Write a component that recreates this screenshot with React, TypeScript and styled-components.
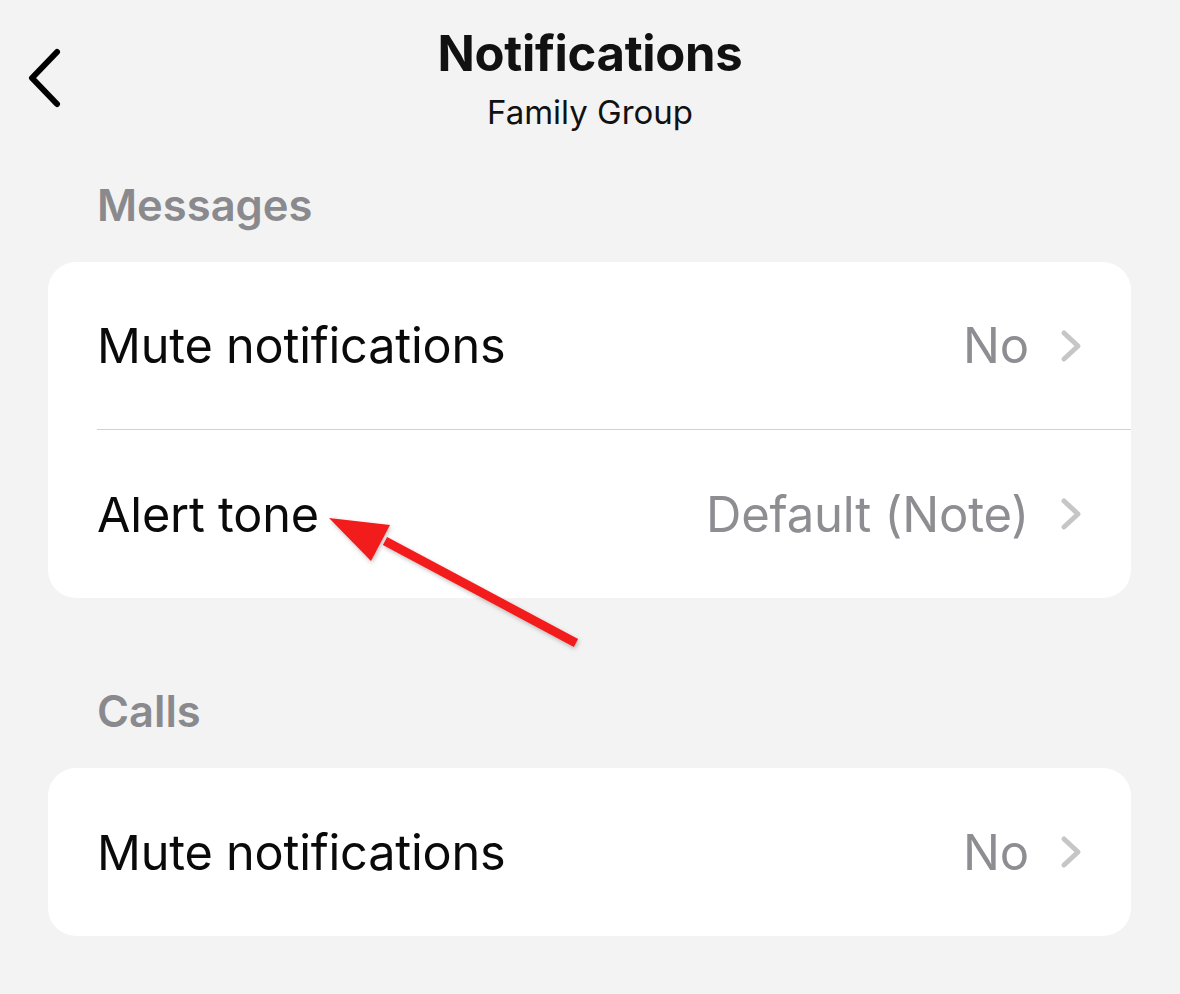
import styled, { createGlobalStyle } from "styled-components";

const GlobalStyle = createGlobalStyle`
  html, body {
    margin: 0;
    padding: 0;
    background: #f3f3f3;
    font-family: Inter, "Noto Sans", "Liberation Sans", sans-serif;
    -webkit-font-smoothing: antialiased;
  }
`;

const Screen = styled.main`
  position: relative;
  width: 1180px;
  height: 994px;
  background: #f3f3f3;
  overflow: hidden;
`;

const NavBar = styled.header`
  display: grid;
  grid-template-columns: 96px 1fr 96px;
  align-items: start;
  height: 183px;
  padding-top: 24px;
  box-sizing: border-box;
`;

const BackButton = styled.button`
  border: none;
  background: none;
  padding: 0;
  margin: 24px 0 0 26px;
  width: 40px;
  height: 60px;
  display: grid;
  place-content: center;
  cursor: pointer;
`;

const TitleBlock = styled.div`
  display: flex;
  flex-direction: column;
  align-items: center;
`;

const Title = styled.h1`
  margin: 0;
  font-size: 49px;
  font-weight: 700;
  color: #111;
  line-height: 60px;
  letter-spacing: -0.3px;
`;

const Subtitle = styled.div`
  font-size: 33px;
  color: #111;
  line-height: 40px;
  margin-top: 8px;
`;

const Section = styled.section`
  padding: 0 49px 0 48px;
  margin-bottom: 91px;
`;

const SectionLabel = styled.h2`
  margin: 0 0 35px 49px;
  font-size: 43.5px;
  font-weight: 600;
  color: #8a8a8e;
  line-height: 44px;
`;

const Card = styled.div`
  background: #fff;
  border-radius: 28px;
  overflow: hidden;
`;

const Row = styled.div<{ $divider?: boolean }>`
  display: flex;
  align-items: center;
  height: 168px;
  margin-left: 49px;
  padding-right: 48px;
  box-sizing: border-box;
  border-bottom: ${(p) => (p.$divider ? "1px solid #d1d1d4" : "none")};
`;

const RowLabel = styled.span`
  flex: 1;
  font-size: 48.6px;
  color: #0a0a0a;
  letter-spacing: -0.2px;
`;

const RowValue = styled.span`
  font-size: 49px;
  color: #8d8d92;
  margin-right: 30px;
  letter-spacing: -0.2px;
`;

const ArrowLayer = styled.svg`
  position: absolute;
  left: 0;
  top: 0;
  pointer-events: none;
`;

function Chevron() {
  return (
    <svg width="24" height="34" viewBox="0 0 24 34">
      <path d="M5 4 L19 17 L5 30" fill="none" stroke="#c6c6c9" strokeWidth="5" strokeLinecap="round" strokeLinejoin="round" />
    </svg>
  );
}

type Item = { label: string; value: string };

function SettingsGroup({ title, items }: { title: string; items: Item[] }) {
  return (
    <Section>
      <SectionLabel>{title}</SectionLabel>
      <Card>
        {items.map((it, i) => (
          <Row key={i} $divider={i < items.length - 1}>
            <RowLabel>{it.label}</RowLabel>
            <RowValue>{it.value}</RowValue>
            <Chevron />
          </Row>
        ))}
      </Card>
    </Section>
  );
}

export default function App() {
  return (
    <>
      <GlobalStyle />
      <Screen>
        <NavBar>
          <BackButton aria-label="Back">
            <svg width="40" height="60" viewBox="0 0 40 60">
              <path d="M31 4 L6 30 L31 56" fill="none" stroke="#000" strokeWidth="6" strokeLinecap="round" strokeLinejoin="round" />
            </svg>
          </BackButton>
          <TitleBlock>
            <Title>Notifications</Title>
            <Subtitle>Family Group</Subtitle>
          </TitleBlock>
          <div />
        </NavBar>

        <SettingsGroup
          title="Messages"
          items={[
            { label: "Mute notifications", value: "No" },
            { label: "Alert tone", value: "Default (Note)" },
          ]}
        />
        <SettingsGroup title="Calls" items={[{ label: "Mute notifications", value: "No" }]} />

        <ArrowLayer width="1180" height="994" viewBox="0 0 1180 994">
          <defs>
            <filter id="shadow" x="-10%" y="-10%" width="120%" height="120%">
              <feDropShadow dx="1" dy="2" stdDeviation="2" floodColor="#000" floodOpacity="0.25" />
            </filter>
          </defs>
          <g filter="url(#shadow)">
            <path d="M576 643 L385 541" stroke="#f21b1b" strokeWidth="9" strokeLinecap="butt" />
            <path d="M329 518 L390 525 L371 561 Z" fill="#f21b1b" />
          </g>
        </ArrowLayer>
      </Screen>
    </>
  );
}
